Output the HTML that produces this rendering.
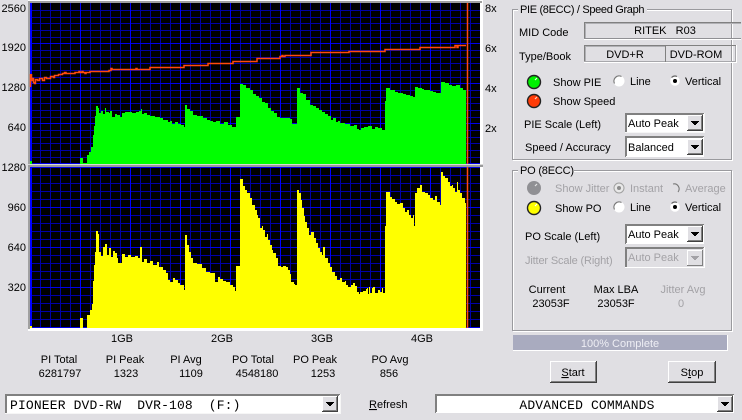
<!DOCTYPE html>
<html><head><meta charset="utf-8"><title>PIE / PO Scan</title>
<style>
html,body{margin:0;padding:0;background:#e0dfe3;width:742px;height:420px;overflow:hidden}
svg{display:block;position:absolute;left:0;top:0}
text{font-family:"Liberation Sans",Arial,sans-serif;font-size:11px;fill:#000}
.m{text-anchor:middle}
.e{text-anchor:end}
.g{fill:#a3a2a6}
.mono{font-family:"Liberation Mono",monospace;font-size:13px;letter-spacing:.15px}
.box{shape-rendering:crispEdges}
</style></head><body>
<svg width="742" height="420" viewBox="0 0 742 420" xmlns="http://www.w3.org/2000/svg">
<defs>
<pattern id="vm" x="30" y="0" width="10" height="10" patternUnits="userSpaceOnUse"><rect width="1" height="10" fill="#0000a8"/></pattern>
<pattern id="vM" x="30" y="0" width="50" height="10" patternUnits="userSpaceOnUse"><rect width="1" height="10" fill="#0000ff"/></pattern>
<g id="btn" class="box">
<rect width="16" height="16" fill="#e0dfe3"/>
<path d="M0 .5H16M.5 0V16" stroke="#fff" fill="none"/>
<path d="M0 15.5H16M15.5 0V16" stroke="#404040" fill="none"/>
<path d="M1 14.5H15M14.5 1V15" stroke="#808080" fill="none"/>
<path d="M4 6H12V7H11V8H10V9H9V10H7V9H6V8H5V7H4Z" fill="#000"/>
</g>
<g id="btnd" class="box">
<rect width="16" height="16" fill="#e0dfe3"/>
<path d="M0 .5H16M.5 0V16" stroke="#fff" fill="none"/>
<path d="M0 15.5H16M15.5 0V16" stroke="#808080" fill="none"/>
<path d="M4 6H12V7H11V8H10V9H9V10H7V9H6V8H5V7H4Z" fill="#a3a2a6"/>
</g>
<g id="radio"><circle r="5.5" fill="#fff"/><path d="M-4.5 2.5A5.2 5.2 0 0 1 2.5 -4.5" stroke="#777" fill="none" stroke-width="1.2"/></g>
<g id="radioOn"><circle r="4.8" fill="#fff"/><path d="M-3.5 -3.5A5 5 0 0 1 2 -4.5" stroke="#666" fill="none" stroke-width="1.2"/><circle r="2" fill="#000"/></g>
</defs>

<!-- chart frames -->
<g class="box">
<rect x="28" y="0" width="455" height="331" fill="#fff"/>
<rect x="28" y="1" width="454" height="2" fill="#a0a0a0"/>
<rect x="28" y="1" width="2" height="328" fill="#a0a0a0"/>
<rect x="30" y="3" width="450" height="161" fill="#000"/>
<rect x="30" y="167" width="450" height="161" fill="#000"/>

<!-- grid -->
<rect x="30" y="3" width="450" height="161" fill="url(#vm)"/>
<rect x="30" y="167" width="450" height="161" fill="url(#vm)"/>
<path d="M30 10.5H480M30 17.5H480M30 23.5H480M30 30.5H480M30 37.5H480M30 50.5H480M30 57.5H480M30 63.5H480M30 70.5H480M30 77.5H480M30 90.5H480M30 97.5H480M30 103.5H480M30 110.5H480M30 117.5H480M30 130.5H480M30 137.5H480M30 143.5H480M30 150.5H480M30 157.5H480
M30 175.5H480M30 183.5H480M30 191.5H480M30 199.5H480M30 215.5H480M30 223.5H480M30 231.5H480M30 239.5H480M30 255.5H480M30 263.5H480M30 271.5H480M30 279.5H480M30 295.5H480M30 303.5H480M30 311.5H480M30 319.5H480" stroke="#0000a8" fill="none"/>
<path d="M30 43.5H480M30 83.5H480M30 123.5H480M30 163.5H480M30 167.5H480M30 207.5H480M30 247.5H480M30 287.5H480M30 327.5H480" stroke="#0000e8" fill="none"/>
<rect x="30" y="3" width="450" height="161" fill="url(#vM)"/>
<rect x="30" y="167" width="450" height="161" fill="url(#vM)"/>
<rect x="30" y="3" width="2" height="325" fill="#0000ff"/>

<!-- PIE green -->
<path fill="#00ff00" d="M30 164V161H32V164H80V158H83V163H87V155H89V152H91V147H93V135H94V126H95V116H96V106H98V108H99V113H101V111H103V114H105V108H106V112H109V113H110V111H112V117H115V114H117V115H120V117H122V113H125V112H132V113H136V112H139V111H141V109H142V114H144V113H147V115H150V116H155V117H160V118H163V120H168V122H170V121H172V124H175V122H178V124H181V125H184V127H185V105H187V109H190V111H193V115H197V116H203V118H207V120H210V121H213V122H216V121H220V124H224V122H228V125H232V127H236V117H240V84H243V85H246V88H250V90H253V94H256V96H259V98H262V102H265V103H268V108H271V111H274V113H277V117H280V118H290V119H292V124H297V88H300V93H303V94H306V100H310V105H313V106H316V108H319V110H322V112H325V114H328V116H331V120H333V118H336V122H338V121H340V123H345V124H350V126H354V125H357V129H359V130H361V128H364V127H368V126H372V129H375V127H378V128H382V130H385V101H386V88H390V90H395V92H398V93H403V94H406V95H410V96H413V97H415V87H418V88H422V89H424V90H430V91H433V92H436V93H441V82H445V83H449V85H452V86H456V85H460V88H463V90H466V164Z"/>

<!-- PO yellow -->
<path fill="#ffff00" d="M30 328V326H32V328H80V318H83V328H87V315H90V310H92V304H93V281H94V265H95V252H96V231H98V234H99V252H101V256H103V247H105V244H107V255H109V248H111V257H113V251H115V253H117V258H118V263H122V254H125V257H128V255H131V257H135V256H138V258H140V247H142V262H144V259H147V263H150V261H153V265H157V262H159V267H163V270H166V273H168V280H170V282H173V278H175V280H178V283H180V285H184V290H185V235H187V245H189V252H191V258H193V263H197V264H202V268H206V272H210V273H215V282H218V277H220V279H223V281H226V282H230V285H233V287H235V291H236V266H240V179H243V186H245V190H247V193H250V198H252V205H255V210H257V215H258V218H260V228H262V226H263V230H265V237H267V234H268V240H270V245H272V250H273V253H276V258H278V266H281V267H283V266H286V267H288V270H290V274H291V282H294V284H295V285H297V190H299V193H301V200H302V208H304V216H305V222H307V228H309V235H311V232H314V238H316V243H318V248H320V252H322V255H323V247H325V258H328V263H330V267H332V272H335V276H337V280H340V278H342V282H345V281H346V285H348V287H351V285H353V283H355V286H357V292H359V294H360V292H363V291H366V289H367V288H368V294H369V287H370V293H372V288H373V287H375V293H378V290H380V292H382V288H383V293H385V226H386V192H390V197H392V199H395V202H397V204H400V203H403V208H405V212H407V210H409V215H411V218H413V215H414V226H415V193H417V188H420V185H422V192H425V193H428V195H430V198H433V200H435V196H437V202H440V205H441V172H443V176H445V178H448V182H450V186H452V185H453V188H455V192H457V182H458V190H460V193H462V198H465V203H466V328Z"/>

<!-- separator -->
<rect x="28" y="164" width="455" height="1" fill="#d8d8d8"/>
<rect x="28" y="165" width="455" height="2" fill="#9a9a9a"/>
</g>

<!-- vertical speed marker -->
<path d="M467.5 3V164M467.5 167V328" stroke="#ff4a10" stroke-width="1.5" fill="none"/>

<!-- speed curve -->
<path fill="none" stroke="#ff4a10" stroke-width="1.5" d="M30.5 87V74M31.5 74V80.5H32.5V78.5H33.5V82.5H34.5V83.5H35.5V79.5H37.5V80.5H39.5V78.5H42.5V80.5H44.5V77.5H46.5V78.5H50.5V76.5H53.5V77.5H54.5V75.5H58.5V74.5H62.5V73.5H64.5V72.5H66V73.5H75V72.5H79V71.5H80V72.5H82V71.5H83V72.5H85V73.5H86V72.5H90V71.5H109V70.5H111V68.5H112V69.5H136V68.5H137V69.5H150V67.5H184V65.5H208V63.5H233V61.5H257V58.5H280V56.5H282V55.5H283V56.5H285V55.5H311V52.5H349V51.5H385V49.5H420V47.5H455V45.5H457V47.5H458V45.5H466"/>

<!-- axis labels -->
<text class="e" x="26" y="12">2560</text>
<text class="e" x="26" y="51">1920</text>
<text class="e" x="26" y="91">1280</text>
<text class="e" x="26" y="131">640</text>
<text class="e" x="26" y="171">1280</text>
<text class="e" x="26" y="211">960</text>
<text class="e" x="26" y="251">640</text>
<text class="e" x="26" y="291">320</text>
<text x="485" y="12">8x</text>
<text x="485" y="52">6x</text>
<text x="485" y="92">4x</text>
<text x="485" y="132">2x</text>
<text class="m" x="122" y="342">1GB</text>
<text class="m" x="222" y="342">2GB</text>
<text class="m" x="322" y="342">3GB</text>
<text class="m" x="422" y="342">4GB</text>

<!-- stats -->
<text class="m" x="59" y="363">PI Total</text><text class="m" x="60" y="377">6281797</text>
<text class="m" x="125" y="363">PI Peak</text><text class="m" x="126" y="377">1323</text>
<text class="m" x="186" y="363">PI Avg</text><text class="m" x="191" y="377">1109</text>
<text class="m" x="253" y="363">PO Total</text><text class="m" x="257" y="377">4548180</text>
<text class="m" x="315" y="363">PO Peak</text><text class="m" x="323" y="377">1253</text>
<text class="m" x="390" y="363">PO Avg</text><text class="m" x="389" y="377">856</text>

<!-- group 1 -->
<g class="box" fill="none">
<rect x="513.5" y="10.5" width="219" height="150" stroke="#fff"/>
<rect x="512.5" y="9.5" width="219" height="150" stroke="#9a9a9e"/>
<rect x="513.5" y="171.5" width="219" height="160" stroke="#fff"/>
<rect x="512.5" y="170.5" width="219" height="160" stroke="#9a9a9e"/>
<rect x="518" y="5" width="129" height="10" fill="#e0dfe3"/>
<rect x="518" y="165" width="56" height="10" fill="#e0dfe3"/>
</g>
<text x="520" y="13" style="letter-spacing:-.33px">PIE (8ECC) / Speed Graph</text>
<text x="520" y="174" style="letter-spacing:-.2px">PO (8ECC)</text>

<text x="519" y="36">MID Code</text>
<text x="519" y="60">Type/Book</text>

<g class="box" fill="none">
<path d="M584.5 38V22.5H741" stroke="#808080"/><path d="M585.5 38V23.5H741" stroke="#b0b0b4"/><path d="M584 38.5H741" stroke="#909094"/><path d="M584 39.5H741" stroke="#fff"/>
<path d="M584.5 62V45.5H665" stroke="#808080"/><path d="M585.5 62V46.5H665" stroke="#b0b0b4"/><path d="M584 61.5H665" stroke="#a8a8ac"/><path d="M584 62.5H665" stroke="#fff"/>
<path d="M665.5 62V45.5H736" stroke="#808080"/><path d="M666 61.5H735.5V46" stroke="#a8a8ac"/><path d="M665 62.5H736.5V45" stroke="#fff"/>
</g>
<text class="m" x="665" y="34" xml:space="preserve">RITEK   R03</text>
<text class="m" x="625" y="58">DVD+R</text>
<text class="m" x="696" y="58">DVD-ROM</text>

<!-- LEDs -->
<g>
<circle cx="534" cy="82" r="6.5" fill="#00f000" stroke="#222" stroke-width="1.4"/><path d="M535 80L537 78" stroke="#e8ffe8" stroke-width="1.2"/>
<circle cx="534" cy="101" r="6.5" fill="#ff3c08" stroke="#222" stroke-width="1.4"/><path d="M535 99L537 97" stroke="#ffd0c0" stroke-width="1.2"/>
<circle cx="534" cy="188" r="7" fill="#909094" /><path d="M535 186L537 184" stroke="#e4e4e4" stroke-width="1.2"/>
<circle cx="534" cy="208" r="6.5" fill="#ffff00" stroke="#222" stroke-width="1.4"/><path d="M535 206L537 204" stroke="#fff" stroke-width="1.2"/>
</g>
<text x="553" y="86">Show PIE</text>
<text x="553" y="105">Show Speed</text>
<text x="555" y="192" class="g">Show Jitter</text>
<text x="555" y="212">Show PO</text>

<!-- radios -->
<use href="#radio" x="619" y="81"/><text x="630" y="85">Line</text>
<use href="#radioOn" x="675" y="81"/><text x="685" y="85">Vertical</text>
<circle cx="619" cy="188" r="5" fill="#e8e8e8" stroke="#a0a0a0"/><circle cx="619" cy="188" r="2" fill="#8c8c8c"/>
<text x="630" y="192" class="g">Instant</text>
<path d="M673 184A5 5 0 0 1 678 192" fill="none" stroke="#777" stroke-width="1.1"/>
<text x="685" y="192" class="g">Average</text>
<use href="#radio" x="619" y="207"/><text x="630" y="211">Line</text>
<use href="#radioOn" x="675" y="207"/><text x="685" y="211">Vertical</text>

<!-- combos -->
<g class="box">
<rect x="625" y="113" width="79" height="20" fill="#fff"/>
<path d="M625 113.5H704M625.5 113V133M626 114.5H703M626.5 114V132" stroke="#808080" fill="none"/>
<path d="M625 132.5H704.5V113" stroke="#f6f6f6" fill="none"/>
<use href="#btn" x="687" y="115"/>
<rect x="625" y="136" width="79" height="21" fill="#fff"/>
<path d="M625 136.5H704M625.5 136V157M626 137.5H703M626.5 137V156" stroke="#808080" fill="none"/>
<use href="#btn" x="687" y="139"/>
<rect x="625" y="224" width="79" height="20" fill="#fff"/>
<path d="M625 224.5H704M625.5 224V244M626 225.5H703M626.5 225V243" stroke="#808080" fill="none"/>
<use href="#btn" x="687" y="226"/>
<rect x="625" y="247" width="79" height="21" fill="#e0dfe3"/>
<path d="M625 247.5H704M625.5 247V268M626 248.5H703M626.5 248V267" stroke="#808080" fill="none"/>
<path d="M625 267.5H704.5V247" stroke="#fff" fill="none"/>
<use href="#btnd" x="687" y="250"/>
</g>
<text x="524" y="128">PIE Scale (Left)</text>
<text x="525" y="151">Speed / Accuracy</text>
<text x="628" y="127">Auto Peak</text>
<text x="628" y="151">Balanced</text>
<text x="525" y="240">PO Scale (Left)</text>
<text x="628" y="238">Auto Peak</text>
<text x="525" y="264" class="g" style="letter-spacing:-.15px">Jitter Scale (Right)</text>
<text x="628" y="261" class="g">Auto Peak</text>

<text class="m" x="547" y="293">Current</text>
<text class="m" x="551" y="307">23053F</text>
<text class="m" x="616" y="293">Max LBA</text>
<text class="m" x="616" y="307">23053F</text>
<text class="m g" x="683" y="293">Jitter Avg</text>
<text class="m g" x="681" y="307">0</text>

<!-- progress -->
<g class="box">
<rect x="513" y="335" width="215" height="16" fill="#fff"/>
<rect x="513" y="335" width="214" height="15" fill="#a9abbf"/>
</g>
<text class="m" x="620" y="347" style="fill:#eeeef4">100% Complete</text>

<!-- buttons -->
<g class="box">
<rect x="550" y="361" width="47" height="22" fill="#e0dfe3"/>
<path d="M550 361.5H597M550.5 361V383" stroke="#fff" fill="none"/>
<path d="M550 382.5H597M596.5 361V383" stroke="#404040" fill="none"/>
<path d="M551 381.5H596M595.5 362V382" stroke="#808080" fill="none"/>
<rect x="668" y="361" width="48" height="22" fill="#e0dfe3"/>
<path d="M668 361.5H716M668.5 361V383" stroke="#fff" fill="none"/>
<path d="M668 382.5H716M715.5 361V383" stroke="#404040" fill="none"/>
<path d="M669 381.5H715M714.5 362V382" stroke="#808080" fill="none"/>
</g>
<text class="m" x="573" y="376"><tspan text-decoration="underline">S</tspan>tart</text>
<text class="m" x="692" y="376">S<tspan text-decoration="underline">t</tspan>op</text>

<!-- bottom combos -->
<g class="box">
<rect x="5" y="394" width="335" height="20" fill="#fff"/>
<path d="M5 394.5H340M5.5 394V414M6 395.5H339M6.5 395V413" stroke="#808080" fill="none"/>
<path d="M5 413.5H340.5V394" stroke="#f6f6f6" fill="none"/>
<use href="#btn" x="322" y="396"/>
<rect x="435" y="394" width="299" height="19" fill="#fff"/>
<path d="M435 394.5H734M435.5 394V413M436 395.5H733M436.5 395V412" stroke="#808080" fill="none"/>
<use href="#btn" x="717" y="396"/>
</g>
<text class="mono" x="10" y="409" xml:space="preserve">PIONEER DVD-RW  DVR-108  (F:)</text>
<text x="369" y="408"><tspan text-decoration="underline">R</tspan>efresh</text>
<text class="mono m" x="587" y="409">ADVANCED COMMANDS</text>
</svg>
</body></html>
